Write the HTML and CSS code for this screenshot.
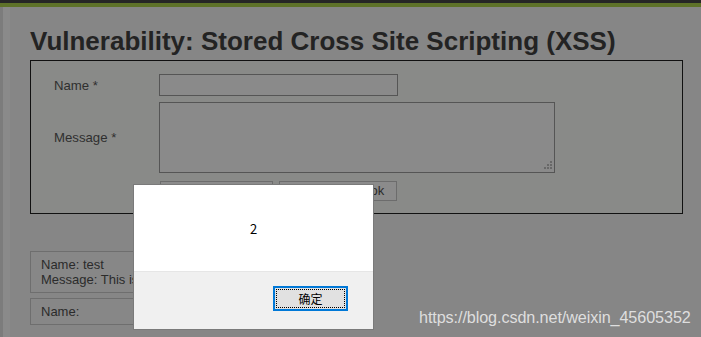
FILE: index.html
```html
<!DOCTYPE html>
<html lang="en">
<head>
  <meta charset="UTF-8" />
  <title>Stored XSS</title>
  <link rel="stylesheet" href="styles.css">
</head>
<body>

  <div class="topbar"></div>
  <div class="greenbar"></div>

  <div class="page">
    <div class="edge"></div>
    <div class="menu-gap"></div>

    <div class="main">
      <h1>Vulnerability: Stored Cross Site Scripting (XSS)</h1>

      <form class="vuln-form">
        <div class="row">
          <label>Name *</label>
          <input type="text" class="name-input" />
        </div>
        <div class="row">
          <label>Message *</label>
          <div class="area">
            <span class="grip"></span>
          </div>
        </div>
        <div class="row buttons">
          <span class="label-space"></span>
          <span class="btn btn-one"></span>
          <span class="btn btn-two">Sign Guestbook</span>
        </div>
      </form>

      <div class="comment">
        Name: test<br />
        Message: This is a test comment.
      </div>
      <div class="comment">Name:</div>
    </div>
  </div>

  <!-- alert box -->
  <div class="dialog">
    <div class="dialog-body">2</div>
    <div class="dialog-foot">
      <button class="ok">确定</button>
    </div>
  </div>

  <div class="watermark">https://blog.csdn.net/weixin_45605352</div>

</body>
</html>
```

FILE: styles.css
```css
* {
  margin: 0;
  padding: 0;
  box-sizing: border-box;
}

html, body {
  height: 100%;
  overflow: hidden;
}

body {
  background: #868686;
  font-family: "Liberation Sans", Arial, sans-serif;
  color: #2a2a2a;
  position: relative;
}

.topbar {
  height: 3px;
  background: #262626;
}

.greenbar {
  height: 4px;
  background: #5e7229;
}

.page {
  display: flex;
  height: 100%;
}

.edge {
  width: 3px;
  background: #7c7c7c;
}

.menu-gap {
  width: 7px;
  background: #8a8a8a;
}

.main {
  flex: 1;
  padding-left: 20px;
  padding-right: 18px;
  background: #868686;
}

h1 {
  font-size: 26px;
  font-weight: bold;
  color: #232323;
  line-height: 30px;
  margin-top: 19px;
  margin-bottom: 4px;
}

.vuln-form {
  border: 1px solid #111;
  background: #898a88;
  padding: 13px 0 12px 23px;
}

.row {
  display: flex;
  align-items: center;
  margin-bottom: 6px;
}

.row label {
  width: 105px;
  font-size: 13.2px;
  color: #2f2f2f;
}

.name-input {
  width: 239px;
  height: 22px;
  border: 1px solid #555;
  background: #8a8a8a;
}

.area {
  position: relative;
  width: 396px;
  height: 71px;
  border: 1px solid #555;
  background: #8a8a8a;
}

/* resize grip: staircase of small dots */
.grip {
  position: absolute;
  right: 8px;
  bottom: 3px;
  width: 2px;
  height: 2px;
  background: #686868;
  box-shadow:
    3px 0 #686868,
    6px 0 #686868,
    3px -3px #686868,
    6px -3px #686868,
    6px -6px #686868;
}

.buttons {
  margin-top: 8px;
  margin-bottom: 0;
}

.label-space {
  width: 106px;
}

.btn {
  display: inline-block;
  height: 20px;
  border: 1px solid #6c6c6c;
  background: #8b8b8b;
  font-size: 13px;
  line-height: 18px;
  color: #2a2a2a;
  text-align: center;
}

.btn-one {
  width: 113px;
}

.btn-two {
  width: 118px;
  margin-left: 6px;
}

.comment {
  width: 330px;
  border: 1px solid #6e6e6e;
  background: #878787;
  font-size: 13px;
  line-height: 15px;
  color: #2b2b2b;
  padding: 5px 10px;
  margin-bottom: 5px;
}

.vuln-form + .comment {
  margin-top: 37px;
}

.dialog {
  position: absolute;
  left: 133px;
  top: 184px;
  width: 241px;
  height: 146px;
  border: 1px solid #7a7a7a;
  background: #fff;
  display: flex;
  flex-direction: column;
}

.dialog-body {
  height: 86px;
  padding-top: 36px;
  text-align: center;
  font-family: "Noto Sans CJK SC", "Liberation Sans", sans-serif;
  font-size: 13px;
  line-height: 16px;
  color: #000;
}

.dialog-foot {
  flex: 1;
  background: #f0f0f0;
  border-top: 1px solid #e6e6e6;
  position: relative;
}

.ok {
  position: absolute;
  left: 139px;
  top: 14px;
  width: 75px;
  height: 25px;
  background: #e1e1e1;
  border: 2px solid #0078d7;
  outline: 1px dotted #000;
  outline-offset: -4px;
  font-family: "Noto Sans CJK SC", sans-serif;
  font-size: 12px;
  color: #000;
}

.watermark {
  position: absolute;
  left: 419px;
  top: 308px;
  font-family: "Liberation Sans", Arial, sans-serif;
  font-size: 16.2px;
  color: #dedede;
  letter-spacing: -0.1px;
}
```
